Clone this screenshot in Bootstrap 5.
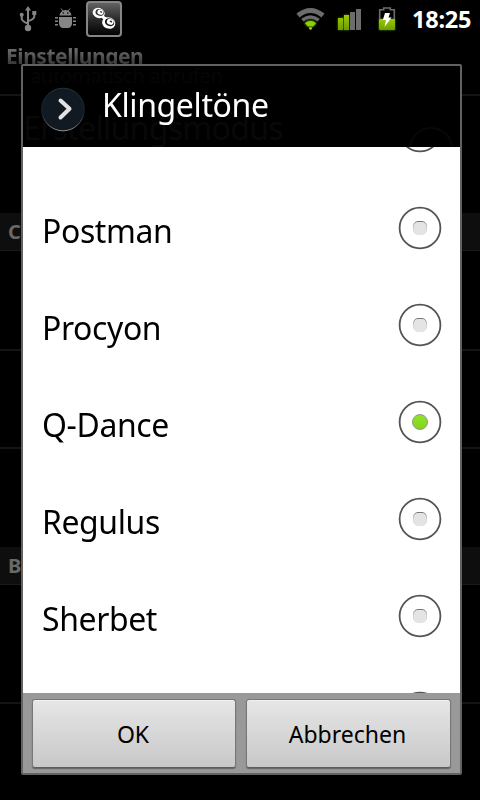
<!DOCTYPE html>
<html lang="de">
<head>
<meta charset="utf-8">
<meta name="viewport" content="width=device-width, initial-scale=1">
<title>Klingeltöne</title>
<link href="https://cdn.jsdelivr.net/npm/bootstrap@5.3.0/dist/css/bootstrap.min.css" rel="stylesheet">
<style>
  body { font-family: "Noto Sans", "Open Sans", sans-serif; background: #000; overflow: hidden; }
  .screen { width: 480px; height: 800px; background: #000; }
  .statusbar { height: 38px; }
  .statusbar svg, .tone svg, .dialog-head svg { display: block; overflow: visible; flex: none; }
  .clock { width: 70px; padding-left: 2px; font-size: 23.5px; line-height: 39px; letter-spacing: -.25px; }
  .app-title { height: 37px; padding-left: 6px; font-size: 21px; line-height: 37px; letter-spacing: -.45px; }
  .app-title span { background: linear-gradient(#686868 30%, #3c3c3c 75%); -webkit-background-clip: text; background-clip: text; color: transparent; }
  .setting { border-bottom: 2px solid #141414; color: #707070; }
  .section-bar { height: 38px; padding-left: 8px; background: #0e0e0e; border-bottom: 1px solid #1a1a1a; color: #686868; font-size: 20px; line-height: 37px; }
  .h-a { height: 21px; } .h-b { height: 117px; } .h-c { height: 100px; } .h-d { height: 98px; } .h-e { height: 119px; }
  .sub-line { font-size: 20px; line-height: 1px; padding-left: 30px; letter-spacing: -.2px; color: #505050; }
  .main-line { font-size: 32px; line-height: 40px; letter-spacing: -.7px; padding: 12px 0 0 23px; }
  .disc { width: 44px; height: 44px; border: 2px solid #707070; margin: 31px 27px 0 0; }
  .dialog-box { left: 21px; top: 64px; width: 441px; height: 711px; border: 2px solid #626262; border-radius: 2px; }
  .dialog-head { height: 81px; padding: 0 0 0 18px; background: rgba(0,0,0,.93); color: #fff; }
  .dialog-head h1 { font-size: 33px; line-height: 40px; letter-spacing: -.4px; margin: 19px 0 0 17px; transform: scaleX(.97); transform-origin: 0 0; }
  .tones { height: 546px; background: #fff; color: #000; }
  .first-tone { margin-top: -64px; }
  .tone { height: 97px; padding: 0 18px 0 19px; flex: none; font-size: 33px; }
  .tone span { padding-top: 4px; letter-spacing: -.4px; transform: scaleX(.968); transform-origin: 0 0; }
  .dialog-foot { height: 80px; padding: 6px 9px 4px; gap: 10px; background: #999; }
  .dialog-foot .btn { flex: 1 1 0; height: 69px; padding: 1px 2px 0 0; font-size: 23px; color: #000; border: 1px solid #777; border-bottom-color: #5c5c5c; border-radius: 3px; background: linear-gradient(#e6e6e6, #c8c8c8); box-shadow: inset 0 1px #f0f0f0, 0 1px 1px rgba(0,0,0,.35); }
  .dialog-foot .btn-ok { flex: 0 0 204px; }
</style>
</head>
<body>
<div class="screen position-relative overflow-hidden">
  <header class="statusbar d-flex align-items-start justify-content-between">
    <div class="d-flex">
      <svg width="122" height="38" viewBox="0 0 122 38">
        <defs><linearGradient id="tile" x2="0" y2="1"><stop stop-color="#666"/><stop offset=".55" stop-color="#262626"/><stop offset="1" stop-color="#000"/></linearGradient></defs>
        <g fill="none" stroke="#858585" stroke-width="2">
          <path d="M28 9v18M28 23.500q-6-2-6.300-5V15M28 21q6-1.500 6.300-4.500V14"/>
        </g>
        <path fill="#858585" d="M28 6l3 4.500h-6zM32.300 11h4v4h-4z"/>
        <circle cx="28" cy="28" r="3.200" fill="#858585"/><circle cx="21.700" cy="14.800" r="2" fill="#858585"/>
        <g fill="#858585">
          <path d="M59.500 15.500q.7-5 6-5.500 5.300.5 6 5.500zM59 17h13v7q-1 4-4 4h-5q-3 0-4-4z"/>
          <path d="M55 17h3v1.500h-3zM55 20.500h3V22h-3zM55 24h3v1.500h-3zM73 17h3v1.500h-3zM73 20.500h3V22h-3zM73 24h3v1.500h-3z"/>
        </g>
        <path d="M61 8.500l2 2.500M70 8.500L68 11" stroke="#858585"/>
        <circle cx="63.300" cy="13" r=".8"/><circle cx="67.800" cy="13" r=".8"/>
        <rect x="87" y="2" width="34" height="34" rx="3" fill="url(#tile)" stroke="#868686" stroke-width="2"/>
        <g transform="rotate(20 98.700 13)">
          <ellipse cx="98.700" cy="13" rx="6.200" ry="5" fill="#fff"/>
          <ellipse cx="99.500" cy="12.200" rx="4.300" ry="3.300" fill="#333"/>
          <ellipse cx="100" cy="11.700" rx="3.100" ry="2.500" fill="#fff"/>
          <ellipse cx="100.700" cy="11.200" rx="1.100" ry=".8" fill="#333"/>
        </g>
        <path d="M102 16.500l4 2.500" stroke="#fff" stroke-width="3"/>
        <g transform="rotate(20 108.700 23)">
          <ellipse cx="108.700" cy="23" rx="6.700" ry="5.700" fill="#fff"/>
          <ellipse cx="109.300" cy="22" rx="4.800" ry="3.800" fill="#181818"/>
          <ellipse cx="109.800" cy="21.400" rx="3.500" ry="2.800" fill="#fff"/>
          <ellipse cx="110.300" cy="20.800" rx="1.300" ry=".9" fill="#222"/>
        </g>
      </svg>
    </div>
    <div class="d-flex">
      <svg width="116" height="38" viewBox="294 0 116 38">
        <defs>
          <filter id="glow" x="-40%" y="-40%" width="180%" height="180%"><feGaussianBlur stdDeviation="1.300"/></filter>
          <linearGradient id="green" x2="0" y2="1"><stop stop-color="#9acb00"/><stop offset="1" stop-color="#6d9d00"/></linearGradient>
        </defs>
        <g fill="none" stroke="#6c6c6c">
          <path d="M298 15.500q12.500-10 25 0" stroke-width="5"/>
          <path d="M302.300 20.200q8.200-6.400 16.400 0" stroke-width="3.600"/>
        </g>
        <path d="M304.500 23q6-5 12 0l-4 4h-4z" fill="#7fb800" filter="url(#glow)"/>
        <path d="M305 23.300q5.500-4.600 11 0l-3.200 3.200q-2.300-1.600-4.600 0z" fill="#8fd000"/>
        <circle cx="310.500" cy="28.300" r="1.500" fill="#8fd000"/>
        <path d="M338 18h5v12h-5zM344 15h5v15h-5z" fill="#6da800" filter="url(#glow)" opacity=".8"/>
        <path d="M338 18h5v12h-5zM344 15h5v15h-5z" fill="url(#green)"/>
        <path d="M350 12h5v18h-5zM356 9h5v21h-5z" fill="#6c6c6c"/>
        <path d="M379.700 19V9.700h4V8h6.600v1.700h4V19" fill="none" stroke="#6c6c6c" stroke-width="1.600"/>
        <path d="M379 19h16v11h-16z" fill="#6da800" filter="url(#glow)" opacity=".8"/>
        <rect x="379" y="19" width="16" height="11" rx="1" fill="url(#green)"/>
        <path d="M385 13h5l-1.500 4.500h3L384.500 27l1.500-7h-3.200z" fill="#fff"/>
      </svg>
      <div class="clock text-white fw-bold">18:25</div>
    </div>
  </header>

  <main>
    <div class="app-title fw-bold"><span>Einstellungen</span></div>
    <div class="setting h-a"><div class="sub-line">automatisch abrufen</div></div>
    <div class="h-b d-flex justify-content-between">
      <div class="setting border-0 main-line">Erstellungsmodus</div>
      <div class="disc rounded-circle"></div>
    </div>
    <div class="section-bar fw-bold">C</div>
    <div class="setting h-c"></div>
    <div class="setting h-d"></div>
    <div class="h-d"></div>
    <div class="section-bar fw-bold">B</div>
    <div class="setting h-e"></div>
  </main>

  <section class="dialog-box position-absolute d-flex flex-column" role="dialog">
    <div class="dialog-head d-flex align-items-start">
      <svg width="44" height="44" viewBox="0 0 44 44" style="margin-top:21px">
        <defs><linearGradient id="rim" x2="0" y2="1"><stop stop-color="#26333b"/><stop offset=".6" stop-color="#17212a"/><stop offset="1" stop-color="#8a8f92"/></linearGradient></defs>
        <circle cx="22" cy="22.500" r="21.300" fill="#111a22" stroke="url(#rim)"/>
        <path d="M19.500 13.500l9 8.300-9 8.700" fill="none" stroke="#e2e2e2" stroke-width="4" stroke-linecap="round" stroke-linejoin="round"/>
      </svg>
      <h1 class="fw-normal">Klingeltöne</h1>
    </div>
    <div class="tones d-flex flex-column overflow-hidden">
      <svg width="0" height="0" class="position-absolute">
        <defs>
          <linearGradient id="lime" x2="0" y2="1"><stop stop-color="#8fe52c"/><stop offset="1" stop-color="#86d219"/></linearGradient>
          <linearGradient id="pit" x2="0" y2="1"><stop stop-color="#777"/><stop offset=".4" stop-color="#ccc"/><stop offset="1" stop-color="#e4e4e4"/></linearGradient>
          <g id="off"><circle cx="22" cy="21" r="20.400" fill="#fff" stroke="#555" stroke-width="1.800"/><rect x="15.500" y="14.500" width="13" height="13" rx="4.500" fill="#e4e4e4" stroke="url(#pit)"/></g>
          <g id="on"><circle cx="22" cy="21" r="20.400" fill="#fff" stroke="#555" stroke-width="1.800"/><circle cx="22" cy="21" r="7.500" fill="url(#lime)" stroke="#8d9a86"/></g>
        </defs>
      </svg>
      <div class="tone first-tone d-flex align-items-center justify-content-between"><span></span><svg width="44" height="43"><use href="#off"/></svg></div>
      <div class="tone d-flex align-items-center justify-content-between"><span>Postman</span><svg width="44" height="43"><use href="#off"/></svg></div>
      <div class="tone d-flex align-items-center justify-content-between"><span>Procyon</span><svg width="44" height="43"><use href="#off"/></svg></div>
      <div class="tone d-flex align-items-center justify-content-between"><span>Q-Dance</span><svg width="44" height="43"><use href="#on"/></svg></div>
      <div class="tone d-flex align-items-center justify-content-between"><span>Regulus</span><svg width="44" height="43"><use href="#off"/></svg></div>
      <div class="tone d-flex align-items-center justify-content-between"><span>Sherbet</span><svg width="44" height="43"><use href="#off"/></svg></div>
      <div class="tone d-flex align-items-center justify-content-between"><span></span><svg width="44" height="43"><use href="#off"/></svg></div>
    </div>
    <div class="dialog-foot d-flex">
      <button type="button" class="btn btn-ok">OK</button>
      <button type="button" class="btn">Abbrechen</button>
    </div>
  </section>
</div>
<script src="https://cdn.jsdelivr.net/npm/bootstrap@5.3.0/dist/js/bootstrap.bundle.min.js"></script>
</body>
</html>
